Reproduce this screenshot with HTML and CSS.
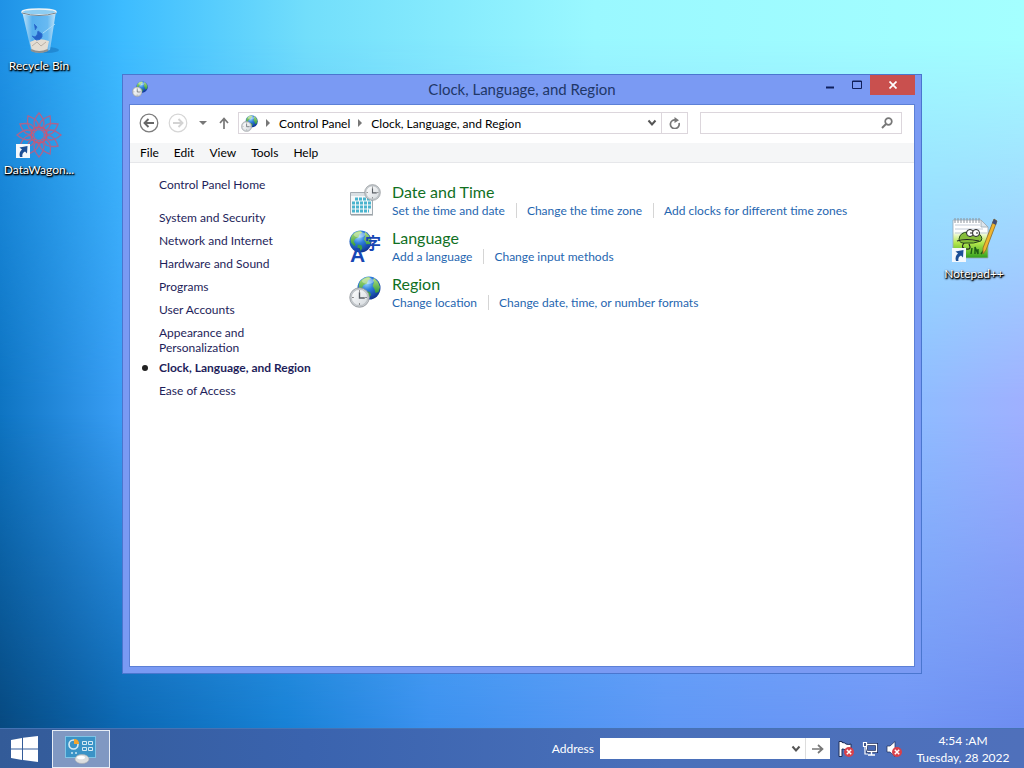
FILE: index.html
```html
<!DOCTYPE html>
<html lang="en">
<head>
    <meta charset="utf-8">
    <title>Clock, Language, and Region</title>
    <link rel="stylesheet" href="styles.css">
</head>
<body>
    <!-- Shared icons -->
    <svg class="sprites" aria-hidden="true">
        <defs>
            <radialGradient id="globeFill" cx="40%" cy="28%" r="75%">
                <stop offset="0" stop-color="#9fdcff"/>
                <stop offset="0.4" stop-color="#2f7fdd"/>
                <stop offset="1" stop-color="#0c2f8e"/>
            </radialGradient>
            <linearGradient id="landFill" x1="0" y1="0" x2="0" y2="1">
                <stop offset="0" stop-color="#b4e07c"/>
                <stop offset="1" stop-color="#2f9a3c"/>
            </linearGradient>
            <linearGradient id="clockFill" x1="0" y1="0" x2="1" y2="1">
                <stop offset="0" stop-color="#ffffff"/>
                <stop offset="1" stop-color="#d5dade"/>
            </linearGradient>
            <linearGradient id="binFill" x1="0" y1="0" x2="1" y2="0">
                <stop offset="0" stop-color="#d6eefb"/>
                <stop offset="0.3" stop-color="#5cb2ee"/>
                <stop offset="0.75" stop-color="#6ebcf2"/>
                <stop offset="1" stop-color="#d3ebf8"/>
            </linearGradient>
            <linearGradient id="noteFill" x1="0" y1="0" x2="0" y2="1">
                <stop offset="0.3" stop-color="#ffffff"/>
                <stop offset="0.6" stop-color="#b6e84c"/>
                <stop offset="1" stop-color="#2f9f1c"/>
            </linearGradient>
            <symbol id="globe" viewBox="0 0 24 24">
                <circle cx="12" cy="12" r="11.5" fill="url(#globeFill)"/>
                <path d="M3 5.500Q7 1 12 1l2 1.500-3 2-1 3-3.500 1.500L5 12l2 3-1.500 2L2 13Q1 9 3 5.500z" fill="url(#landFill)"/>
                <path d="M17 2l4 4 2 5-1.500 5-3 1-1-4-2-3 1.500-4-1-2z" fill="url(#landFill)"/>
                <path d="M9 15l4 1 1 3-3 4-2-3z" fill="#3d9f48"/>
                <ellipse cx="11" cy="5" rx="6" ry="3" fill="#fff" opacity="0.35"/>
            </symbol>
            <symbol id="clock" viewBox="0 0 20 20">
                <circle cx="10" cy="10" r="9.300" fill="#c6cbcf" stroke="#8c9195" stroke-width="0.700"/>
                <circle cx="10" cy="10" r="7.700" fill="url(#clockFill)" stroke="#a8adb2" stroke-width="0.500"/>
                <path d="M10 3v1.500M10 15.500V17M3 10h1.500M15.500 10H17" stroke="#777" stroke-width="1"/>
                <path d="M10 5v5.500h5" fill="none" stroke="#5a5f66" stroke-width="1.300"/>
            </symbol>
            <symbol id="region" viewBox="0 0 32 32">
                <use href="#globe" x="8" y="0" width="24" height="24"/>
                <use href="#clock" x="0" y="11" width="21" height="21"/>
            </symbol>
            <symbol id="shortcut" viewBox="0 0 14 14">
                <rect width="14" height="14" fill="#f4f8fc"/>
                <path d="M4 13Q2.500 8 6 5.500L3.500 3.500 11.500 2 11 9.500 9 7.500Q5.500 9 6.500 13z" fill="#1c4f96"/>
            </symbol>
            <symbol id="chevron" viewBox="0 0 10 8">
                <path d="M1.500 1.500L5 5.500l3.500-4" fill="none" stroke="#555" stroke-width="2"/>
            </symbol>
            <symbol id="cross" viewBox="0 0 10 10">
                <circle cx="5" cy="5" r="5" fill="#d8404a"/>
                <path d="M2.800 2.800l4.400 4.400M7.200 2.800L2.800 7.200" stroke="#fff" stroke-width="1.500"/>
            </symbol>
        </defs>
    </svg>

    <main class="desktop">
        <!-- Desktop shortcuts -->
        <a href="#" class="shortcut recycle-bin">
            <svg width="48" height="48" viewBox="0 0 48 48">
                <ellipse cx="32" cy="43" rx="12" ry="3" fill="#0b4f94" opacity="0.3"/>
                <path d="M7 4h34l-6 39q-10 4-19 0z" fill="url(#binFill)" opacity="0.9"/>
                <path d="M15 35q8-5 19-1l-2 10q-8 3-15 0z" fill="#e4ddd3"/>
                <path d="M17 39l5-4 4 4 5-4" fill="none" stroke="#b9b0a6" stroke-width="1"/>
                <path d="M19 17l3 3-2 3M17 29q5 3 6-5l4 3q1 6-6 6z" fill="#2464c8" stroke="#2f6fd0" stroke-width="1"/>
                <path d="M40 17l-12 9" stroke="#aadcf8" stroke-width="1"/>
                <ellipse cx="24" cy="5" rx="17" ry="3" fill="#8ecdf2" stroke="#eef4f7" stroke-width="1.500"/>
                <path d="M7 6q17 5 34 0" fill="none" stroke="#73828c" stroke-width="1"/>
                <path d="M16 43q8 4 17 0" fill="none" stroke="#8b8f90" stroke-width="2"/>
            </svg>
            <span>Recycle Bin</span>
        </a>
        <a href="#" class="shortcut datawagon">
            <svg width="48" height="48" viewBox="0 0 48 48">
                <g fill="none" stroke="#a9658f" stroke-width="1.300">
                    <path id="petal" d="M24 19Q34 14 24 2Q14 14 24 19z"/>
                    <use href="#petal" transform="rotate(30 24 24)"/>
                    <use href="#petal" transform="rotate(60 24 24)"/>
                    <use href="#petal" transform="rotate(90 24 24)"/>
                    <use href="#petal" transform="rotate(120 24 24)"/>
                    <use href="#petal" transform="rotate(150 24 24)"/>
                    <use href="#petal" transform="rotate(180 24 24)"/>
                    <use href="#petal" transform="rotate(210 24 24)"/>
                    <use href="#petal" transform="rotate(240 24 24)"/>
                    <use href="#petal" transform="rotate(270 24 24)"/>
                    <use href="#petal" transform="rotate(300 24 24)"/>
                    <use href="#petal" transform="rotate(330 24 24)"/>
                    <circle cx="24" cy="24" r="8" stroke="#cc5570"/>
                </g>
                <use href="#shortcut" x="1" y="33" width="14" height="14"/>
            </svg>
            <span>DataWagon...</span>
        </a>
        <a href="#" class="shortcut notepad">
            <svg width="48" height="48" viewBox="0 0 48 48">
                <path d="M3 5h28l7 7v31H3z" fill="url(#noteFill)" stroke="#9aa8b4" stroke-width="0.800"/>
                <path d="M5 10h25M5 14h28M5 18h10M30 18h7" stroke="#c3ccd8" stroke-width="1"/>
                <path d="M5 3v5M8 3v5M11 3v5M14 3v5M17 3v5M20 3v5M23 3v5M26 3v5M29 3v5" stroke="#8d949c" stroke-width="1"/>
                <path d="M31 5v7h7z" fill="#dde4ea" stroke="#9aa8b4" stroke-width="0.800"/>
                <path d="M9 24q1-7 9-7h8q8 4 5 9-8 3-14 2-8 1-8-4z" fill="#86bd3a" stroke="#25491a" stroke-width="1"/>
                <circle cx="20" cy="18" r="3.500" fill="#fff" stroke="#222"/>
                <circle cx="26" cy="18" r="3.500" fill="#fff" stroke="#222"/>
                <path d="M20 18h2M26 18h2M7 26q9-3 22 0M14 28q-4 5 2 6t3-5" fill="none" stroke="#222" stroke-width="1.200"/>
                <path d="M21 39l1-6M25 39v-7l3 7v-5M31 39l3-4" stroke="#1c5c14" stroke-width="1.400" fill="none"/>
                <path d="M44 4l3 2-11 29-3 4 0-6z" fill="#f0b52e" stroke="#8d6a25" stroke-width="0.800"/>
                <path d="M44 4l3 2-1 4-4-2z" fill="#3f4d78"/>
                <use href="#shortcut" x="2" y="33" width="14" height="14"/>
            </svg>
            <span>Notepad++</span>
        </a>

        <!-- Control Panel window -->
        <section class="window">
            <header class="titlebar">
                <svg class="window-icon" width="16" height="16"><use href="#region"/></svg>
                <h1>Clock, Language, and Region</h1>
                <div class="window-buttons">
                    <button aria-label="Minimize"><svg width="10" height="10"><path d="M1 7.500h8" stroke="#10205c" stroke-width="2"/></svg></button>
                    <button aria-label="Maximize"><svg width="10" height="10"><path d="M0.500 1h9v7.500h-9zM0 1.500h10" fill="none" stroke="#10205c"/></svg></button>
                    <button class="close" aria-label="Close"><svg width="8" height="8"><path d="M0.500 0.500l7 7M7.500 0.500l-7 7" stroke="#fff" stroke-width="1.700"/></svg></button>
                </div>
            </header>
            <div class="client">
                <div class="navbar">
                    <button class="round" aria-label="Back">
                        <svg width="20" height="20"><circle cx="10" cy="10" r="8.800" fill="none" stroke="#7d7d7d" stroke-width="1.300"/><path d="M15 10H6M9.500 6L5.500 10l4 4" fill="none" stroke="#666" stroke-width="1.900"/></svg>
                    </button>
                    <button class="round" aria-label="Forward">
                        <svg width="20" height="20"><circle cx="10" cy="10" r="8.800" fill="none" stroke="#d6d6d6" stroke-width="1.200"/><path d="M5 10h9M10.500 6l4 4-4 4" fill="none" stroke="#d3d3d3" stroke-width="1.900"/></svg>
                    </button>
                    <button class="recent" aria-label="Recent locations"><svg width="8" height="4"><path d="M0 0h8L4 4z" fill="#777"/></svg></button>
                    <button class="up" aria-label="Up"><svg width="10" height="12"><path d="M5 12V2M1 6l4-4.500L9 6" fill="none" stroke="#777" stroke-width="1.700"/></svg></button>
                    <div class="address">
                        <svg width="17" height="17"><use href="#region"/></svg>
                        <svg class="crumb-arrow" width="4" height="8"><path d="M0 0l4 4-4 4z" fill="#777"/></svg>
                        <a href="#">Control Panel</a>
                        <svg class="crumb-arrow" width="4" height="8"><path d="M0 0l4 4-4 4z" fill="#777"/></svg>
                        <a href="#">Clock, Language, and Region</a>
                        <button class="drop" aria-label="Previous locations"><svg width="10" height="8"><use href="#chevron"/></svg></button>
                        <button class="refresh" aria-label="Refresh"><svg width="12" height="12"><path d="M10 5a4.400 4.400 0 1 1-3-3" fill="none" stroke="#777" stroke-width="1.700" transform="translate(0 1)"/><path d="M5.500 0L10 3.200 5.500 6z" fill="#777"/></svg></button>
                    </div>
                    <div class="search">
                        <input type="text" aria-label="Search Control Panel">
                        <svg width="12" height="12"><circle cx="7.500" cy="4.500" r="3.300" fill="none" stroke="#777" stroke-width="1.700"/><path d="M5 7L1 11" stroke="#777" stroke-width="2"/></svg>
                    </div>
                </div>
                <nav class="menubar">
                    <button>File</button>
                    <button>Edit</button>
                    <button>View</button>
                    <button>Tools</button>
                    <button>Help</button>
                </nav>
                <div class="content">
                    <nav class="sidebar">
                        <a href="#" class="home">Control Panel Home</a>
                        <ul>
                            <li><a href="#">System and Security</a></li>
                            <li><a href="#">Network and Internet</a></li>
                            <li><a href="#">Hardware and Sound</a></li>
                            <li><a href="#">Programs</a></li>
                            <li><a href="#">User Accounts</a></li>
                            <li><a href="#">Appearance and<br>Personalization</a></li>
                            <li class="current"><a href="#">Clock, Language, and Region</a></li>
                            <li><a href="#">Ease of Access</a></li>
                        </ul>
                    </nav>
                    <div class="categories">
                        <div class="category">
                            <svg width="34" height="34" viewBox="0 0 34 34">
                                <path d="M2.500 9.500h22v22h-22z" fill="#f6f8f9" stroke="#a3abb1"/>
                                <path d="M3 10h21v3H3z" fill="#d9dfe3"/>
                                <path d="M7 16h17M4 20h20M4 24h20M4 28h17" stroke="#4ab4ce" stroke-width="3" stroke-dasharray="3 1"/>
                                <path d="M3 32h22" stroke="#8f979c" stroke-width="1"/>
                                <use href="#clock" x="16" y="1" width="17" height="17"/>
                            </svg>
                            <div>
                                <h2><a href="#">Date and Time</a></h2>
                                <ul>
                                    <li><a href="#">Set the time and date</a></li>
                                    <li><a href="#">Change the time zone</a></li>
                                    <li><a href="#">Add clocks for different time zones</a></li>
                                </ul>
                            </div>
                        </div>
                        <div class="category">
                            <svg class="language-icon" width="34" height="34" viewBox="0 0 34 34">
                                <use href="#globe" x="1" y="1" width="23" height="23"/>
                                <text x="17" y="20" class="kanji">字</text>
                                <text x="2" y="33" class="latin">A</text>
                            </svg>
                            <div>
                                <h2><a href="#">Language</a></h2>
                                <ul>
                                    <li><a href="#">Add a language</a></li>
                                    <li><a href="#">Change input methods</a></li>
                                </ul>
                            </div>
                        </div>
                        <div class="category">
                            <svg width="34" height="34" viewBox="0 0 34 34"><use href="#region" x="1" y="1" width="32" height="32"/></svg>
                            <div>
                                <h2><a href="#">Region</a></h2>
                                <ul>
                                    <li><a href="#">Change location</a></li>
                                    <li><a href="#">Change date, time, or number formats</a></li>
                                </ul>
                            </div>
                        </div>
                    </div>
                </div>
            </div>
        </section>
    </main>

    <footer class="taskbar">
        <button class="start" aria-label="Start">
            <svg width="27" height="26" viewBox="0 0 27 26"><path d="M0 4l11-2v10.500H0zM12 1.800L27 0v12.500H12zM0 13.500h11V24L0 22zM12 13.500h15V26l-15-2z" fill="#fff"/></svg>
        </button>
        <button class="task" aria-label="Control Panel">
            <svg width="32" height="30" viewBox="0 0 32 30">
                <rect x="0.500" y="2.500" width="30" height="21" fill="#3b93c6" stroke="#7fc4e6"/>
                <circle cx="8.500" cy="10.500" r="4.500" fill="none" stroke="#d5eaf4" stroke-width="1.600"/>
                <path d="M9 10V5q5 0 5 5z" fill="#f4a52c"/>
                <path d="M17.500 7.500h4v3h-4zM23.500 7.500h4v3h-4zM17.500 13.500h4v3h-4zM23.500 13.500h4v3h-4z" fill="#3b93c6" stroke="#d5eaf4"/>
                <path d="M6 19h2M10 19h2" stroke="#a5d2e8" stroke-width="2"/>
                <ellipse cx="17" cy="25" rx="7" ry="4.500" fill="#dcdedf" stroke="#a9adb0" stroke-width="0.600"/>
                <ellipse cx="16" cy="23.500" rx="4" ry="1.800" fill="#fff"/>
            </svg>
        </button>
        <form class="address-toolbar">
            <label for="taskAddress">Address</label>
            <div class="field">
                <input type="text" id="taskAddress">
                <button type="button" class="drop" aria-label="Show list"><svg width="10" height="8"><use href="#chevron"/></svg></button>
                <button type="button" class="go" aria-label="Go"><svg width="12" height="10"><path d="M0 5h10M6 1l4.500 4L6 9" fill="none" stroke="#777" stroke-width="1.700"/></svg></button>
            </div>
        </form>
        <div class="tray">
            <button aria-label="Action Center">
                <svg width="16" height="16"><path d="M1 0.500h3v1q3 0 4 1.500 3 1 5 0v6H8Q6 8 4 8v7.500H1z" fill="#fff" stroke="#1c2c58"/><use href="#cross" x="6" y="6" width="10" height="10"/></svg>
            </button>
            <button aria-label="Network">
                <svg width="16" height="16"><path d="M4.500 3.500h10v7h-10z" fill="#4668b4" stroke="#14265a" stroke-width="3"/><path d="M4.500 3.500h10v7h-10zM9.500 10.500v3M6 14h7" fill="none" stroke="#fff" stroke-width="1.400"/><path d="M1.500 1.500h3v4h-3zM3 5v8h3" fill="#2d4684" stroke="#fff" stroke-width="1.200"/></svg>
            </button>
            <button aria-label="Volume">
                <svg width="16" height="16"><path d="M1 5h3l5-4.500v15L4 11H1z" fill="#fff" stroke="#1c2c58" stroke-width="0.700"/><use href="#cross" x="6" y="6" width="10" height="10"/></svg>
            </button>
        </div>
        <div class="clock">
            <div>4:54 :AM</div>
            <div>Tuesday, 28 2022</div>
        </div>
    </footer>
</body>
</html>
```
FILE: styles.css
```css
* {
    box-sizing: border-box;
}

body {
    margin: 0;
    height: 100vh;
    display: flex;
    flex-direction: column;
    position: relative;
    overflow: hidden;
    font-family: Lato, "Open Sans", sans-serif;
    font-size: 12px;
    line-height: 15px;
    background: linear-gradient(to right, #1f92e6 0%, #3dbcff 12%, #72defb 30%, #9af8ff 58%, #a4ffff 100%);
}

/* The wallpaper is three horizontal blends faded into each other */
body::before,
body::after {
    content: "";
    position: absolute;
    inset: 0;
    z-index: -1;
}

body::before {
    background: linear-gradient(to right, #0e74c2 0%, #3a9ff6 12%, #6ab6fb 50%, #90bcff 90%, #9fb0ff 100%);
    mask-image: linear-gradient(transparent 5%, #000 52%);
}

body::after {
    background: linear-gradient(to right, #07487e 0%, #0a66b0 12%, #1680d4 28%, #3a90ee 42%, #5e96f5 65%, #7094f5 88%, #6c8cf0 100%);
    mask-image: linear-gradient(transparent 54%, #000 96%);
}

a {
    color: inherit;
    text-decoration: none;
}

button {
    display: flex;
    align-items: center;
    justify-content: center;
    padding: 0;
    border: none;
    background: none;
    font: inherit;
}

input {
    flex: 1;
    min-width: 0;
    border: none;
    outline: none;
    background: none;
    font: inherit;
}

ul {
    margin: 0;
    padding: 0;
    list-style: none;
}

.sprites {
    position: absolute;
    width: 0;
    height: 0;
}

/* Desktop */
.desktop {
    flex: 1;
    position: relative;
}

.shortcut {
    position: absolute;
    width: 76px;
    display: flex;
    flex-direction: column;
    align-items: center;
    gap: 3px;
    color: white;
    text-shadow: 0 1px 2px #000, 1px 1px 2px #000, 1px 1px 1px #000;
}

.recycle-bin {
    top: 7px;
    left: 1px;
}

.datawagon {
    top: 111px;
    left: 1px;
}

.notepad {
    top: 215px;
    right: 12px;
}

/* Window */
.window {
    position: absolute;
    top: 74px;
    right: 102px;
    bottom: 54px;
    left: 122px;
    display: flex;
    flex-direction: column;
    padding: 0 6px 6px;
    border: 1px solid #4a76cf;
    background-color: #7a9af3;
}

.titlebar {
    display: flex;
    height: 29px;
    padding-left: 3px;
}

.window-icon {
    margin-top: 6px;
}

.titlebar h1 {
    flex: 1;
    margin: 0;
    padding-left: 80px;
    color: #1f3768;
    font-size: 15px;
    font-weight: normal;
    line-height: 29px;
    text-align: center;
}

.window-buttons {
    display: flex;
}

.window-buttons button {
    width: 27px;
    height: 20px;
}

.window-buttons .close {
    width: 45px;
    background-color: #c9504e;
}

.client {
    flex: 1;
    display: flex;
    flex-direction: column;
    border: 1px solid #5c80d6;
    background-color: white;
}

.navbar {
    display: flex;
    align-items: center;
    height: 38px;
    padding: 0 12px 2px 9px;
}

.round {
    margin-right: 9px;
}

.recent {
    width: 12px;
}

.up {
    width: 29px;
}

.address,
.search {
    display: flex;
    align-items: center;
    height: 22px;
    border: 1px solid #dcd6dc;
}

.address {
    flex: 1;
    padding-left: 2px;
}

.address a {
    white-space: nowrap;
}

.crumb-arrow {
    margin: 0 9px 0 8px;
}

.address .drop {
    width: 18px;
    margin-left: auto;
}

.refresh {
    width: 26px;
    height: 20px;
    border-left: 1px solid #dcd6dc;
}

.search {
    width: 202px;
    margin-left: 12px;
    padding-right: 8px;
}

.menubar {
    display: flex;
    gap: 15px;
    height: 20px;
    padding-left: 10px;
    border-bottom: 1px solid #e6e7ea;
    background-color: #f5f6f7;
}

.content {
    flex: 1;
    display: flex;
}

.sidebar {
    width: 218px;
    padding: 14px 0 0 29px;
    color: #1e1e5a;
}

.sidebar .home {
    display: block;
    margin-bottom: 18px;
}

.sidebar li {
    margin-bottom: 8px;
}

.sidebar .current {
    position: relative;
    margin-top: -3px;
    font-weight: bold;
    white-space: nowrap;
}

.current::before {
    content: "";
    position: absolute;
    top: 5px;
    left: -17px;
    width: 6px;
    height: 6px;
    border-radius: 50%;
    background-color: #222;
}

.categories {
    flex: 1;
    padding-top: 20px;
}

.category {
    display: flex;
    gap: 10px;
    height: 46px;
}

.category h2 {
    margin: 0 0 2px;
    color: #11701f;
    font-size: 16px;
    font-weight: normal;
    line-height: 18px;
}

.category ul {
    display: flex;
    color: #1f66b0;
}

.category li + li {
    margin-left: 11px;
    padding-left: 10px;
    border-left: 1px solid #d5d5d5;
}

.language-icon {
    overflow: visible;
    fill: #1746b4;
}

.kanji {
    font-family: "Noto Sans CJK JP", sans-serif;
    font-size: 16px;
    font-weight: bold;
}

.latin {
    font-family: "Liberation Sans", sans-serif;
    font-size: 21px;
    font-weight: bold;
}

/* Taskbar */
.taskbar {
    display: flex;
    align-items: center;
    height: 40px;
    color: white;
    border-top: 1px solid #4673b4;
    background: linear-gradient(to right, #335b98, #3a63ae 30%, #4a70ba 65%, #4f70bb);
}

.start {
    width: 52px;
    padding-right: 3px;
}

.task {
    width: 58px;
    height: 38px;
    border: 1px solid #e6edf6;
    background-color: #8098c2;
}

.address-toolbar {
    display: flex;
    align-items: center;
    gap: 6px;
    margin-left: auto;
}

.field {
    display: flex;
    align-items: center;
    width: 230px;
    height: 21px;
    background-color: white;
}

.field .drop {
    width: 18px;
}

.go {
    width: 25px;
    height: 21px;
    border-left: 1px solid #ddd;
}

.tray {
    display: flex;
    gap: 8px;
    margin-left: 8px;
}

.taskbar .clock {
    width: 122px;
    line-height: 17px;
    text-align: center;
    white-space: nowrap;
}
```
